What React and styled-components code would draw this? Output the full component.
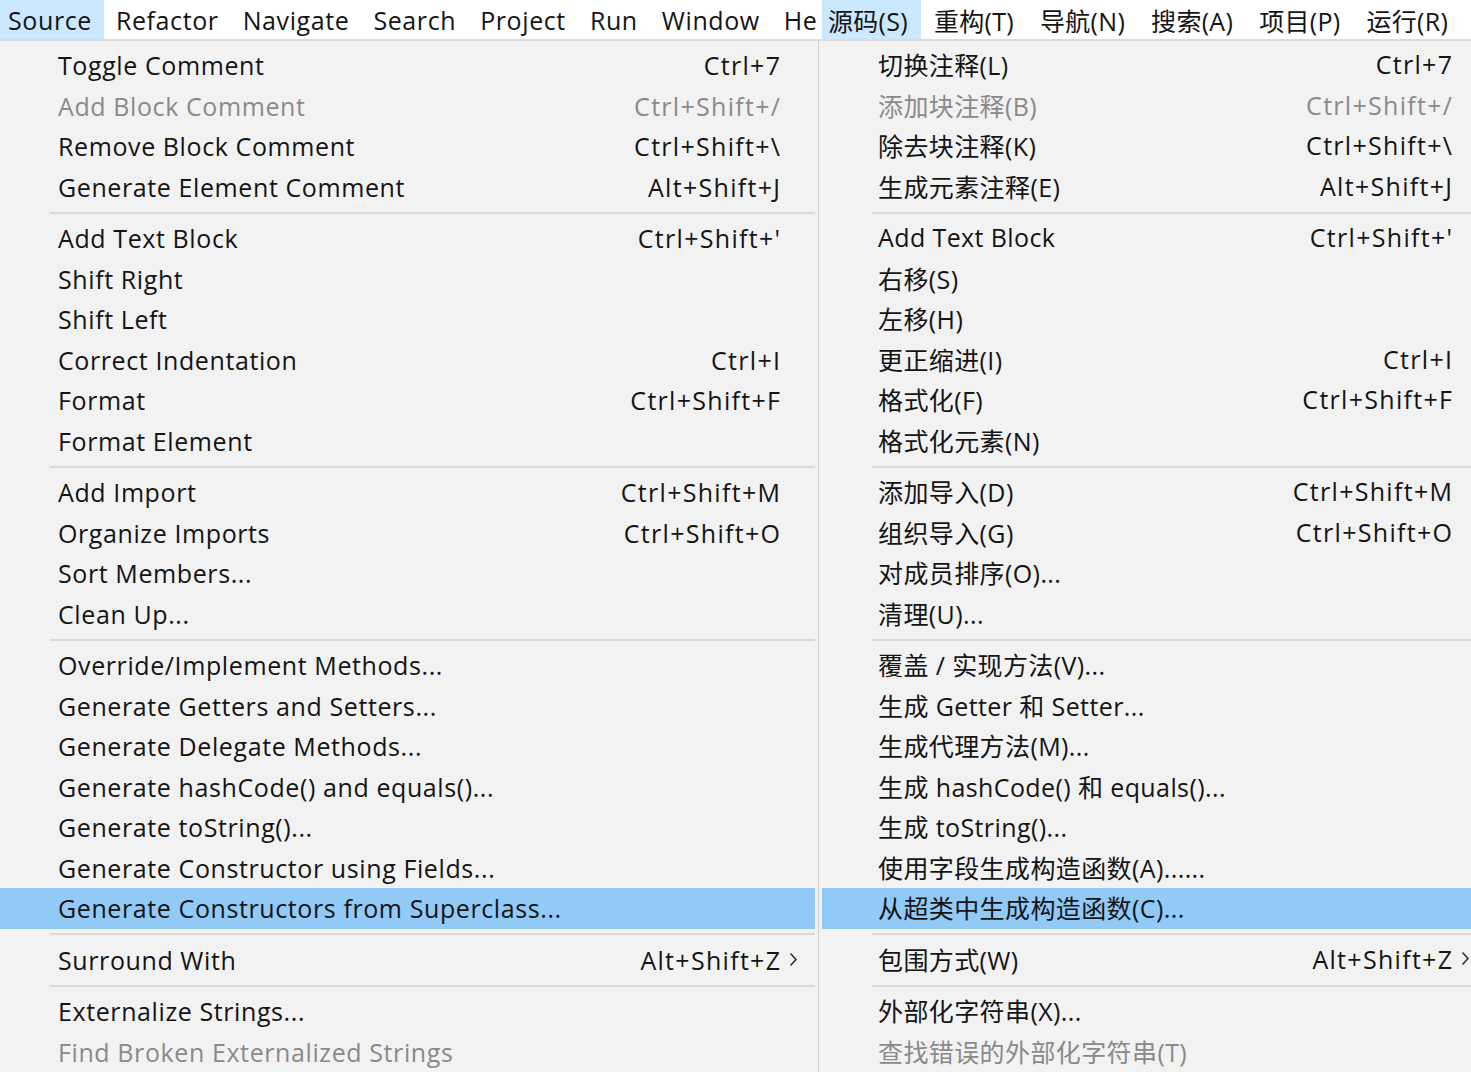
import React from 'react'
import styled, { createGlobalStyle } from "styled-components";

const GlobalStyle = createGlobalStyle`
  html, body {
    margin: 0;
    padding: 0;
    background: #f2f2f2;
    overflow: hidden;
  }
  body {
    font-family: "Open Sans", "Noto Sans CJK SC", sans-serif;
    color: #141414;
  }
`;

const Screen = styled.div`
  display: flex;
  width: 1471px;
  height: 1072px;
  overflow: hidden;
`;

const Panel = styled.div`
  display: flex;
  flex-direction: column;
  width: ${p => p.$width}px;
  flex-shrink: 0;
  overflow: hidden;
`;

const MenuBar = styled.div`
  display: flex;
  height: 40px;
  background: #ffffff;
  border-bottom: 2px solid #dcdcdc;
  padding-left: ${p => p.$lead}px;
  white-space: nowrap;
  overflow: hidden;
`;

const BarItem = styled.div`
  display: flex;
  align-items: center;
  flex-shrink: 0;
  padding: 0 ${p => p.$pad}px;
  font-size: 25px;
  letter-spacing: ${p => p.$spacing}px;
  background: ${p => (p.$active ? "#cce8ff" : "transparent")};
  &:first-child {
    padding-left: ${p => p.$firstPad}px;
  }
  &:last-child {
    flex-shrink: 1;
    min-width: 0;
    overflow: hidden;
    padding-right: 0;
  }
`;

const Dropdown = styled.div`
  flex: 1;
  display: flex;
  flex-direction: column;
  padding-top: 4px;
  padding-left: ${p => p.$padLeft}px;
  padding-right: ${p => p.$padRight}px;
  border-right: ${p => (p.$divider ? "1px solid #cfcfcf" : "none")};
`;

const Row = styled.div`
  display: flex;
  align-items: center;
  height: 40.5px;
  box-sizing: border-box;
  flex-shrink: 0;
  padding-left: ${p => p.$indent}px;
  padding-bottom: ${p => p.$lift}px;
  font-size: 25px;
  white-space: nowrap;
  color: ${p => (p.$disabled ? "#8a8a8a" : "#141414")};
  background: ${p => (p.$selected ? "#91c9f7" : "transparent")};
`;

const Label = styled.span`
  flex: 1;
  letter-spacing: ${p => p.$spacing}px;
`;

const Shortcut = styled.span`
  flex-shrink: 0;
  letter-spacing: 1.3px;
  margin-right: -1.3px;
`;

const ArrowCell = styled.span`
  width: ${p => p.$width}px;
  flex-shrink: 0;
  display: flex;
  align-items: center;
  padding-left: 9px;
  box-sizing: border-box;
`;

const Separator = styled.div`
  height: 11px;
  flex-shrink: 0;
  display: flex;
  align-items: center;
  margin-left: ${p => p.$inset}px;
  &::after {
    content: "";
    display: block;
    width: 100%;
    height: 2px;
    background: #d9d9d9;
  }
`;

const Chevron = () => (
  <svg width="9" height="15" viewBox="0 0 9 15">
    <path d="M1.5 1.5 L7 7.5 L1.5 13.5" fill="none" stroke="#333" strokeWidth="1.6" />
  </svg>
);

const SEP = "sep";

const englishBar = ["Source", "Refactor", "Navigate", "Search", "Project", "Run", "Window", "Help"];
const chineseBar = ["源码(S)", "重构(T)", "导航(N)", "搜索(A)", "项目(P)", "运行(R)"];

const englishItems = [
  { label: "Toggle Comment", key: "Ctrl+7" },
  { label: "Add Block Comment", key: "Ctrl+Shift+/", disabled: true },
  { label: "Remove Block Comment", key: "Ctrl+Shift+\\" },
  { label: "Generate Element Comment", key: "Alt+Shift+J" },
  SEP,
  { label: "Add Text Block", key: "Ctrl+Shift+'" },
  { label: "Shift Right" },
  { label: "Shift Left" },
  { label: "Correct Indentation", key: "Ctrl+I" },
  { label: "Format", key: "Ctrl+Shift+F" },
  { label: "Format Element" },
  SEP,
  { label: "Add Import", key: "Ctrl+Shift+M" },
  { label: "Organize Imports", key: "Ctrl+Shift+O" },
  { label: "Sort Members..." },
  { label: "Clean Up..." },
  SEP,
  { label: "Override/Implement Methods..." },
  { label: "Generate Getters and Setters..." },
  { label: "Generate Delegate Methods..." },
  { label: "Generate hashCode() and equals()..." },
  { label: "Generate toString()..." },
  { label: "Generate Constructor using Fields..." },
  { label: "Generate Constructors from Superclass...", selected: true },
  SEP,
  { label: "Surround With", key: "Alt+Shift+Z", submenu: true },
  SEP,
  { label: "Externalize Strings..." },
  { label: "Find Broken Externalized Strings", disabled: true },
];

const chineseItems = [
  { label: "切换注释(L)", key: "Ctrl+7" },
  { label: "添加块注释(B)", key: "Ctrl+Shift+/", disabled: true },
  { label: "除去块注释(K)", key: "Ctrl+Shift+\\" },
  { label: "生成元素注释(E)", key: "Alt+Shift+J" },
  SEP,
  { label: "Add Text Block", key: "Ctrl+Shift+'" },
  { label: "右移(S)" },
  { label: "左移(H)" },
  { label: "更正缩进(I)", key: "Ctrl+I" },
  { label: "格式化(F)", key: "Ctrl+Shift+F" },
  { label: "格式化元素(N)" },
  SEP,
  { label: "添加导入(D)", key: "Ctrl+Shift+M" },
  { label: "组织导入(G)", key: "Ctrl+Shift+O" },
  { label: "对成员排序(O)..." },
  { label: "清理(U)..." },
  SEP,
  { label: "覆盖 / 实现方法(V)..." },
  { label: "生成 Getter 和 Setter..." },
  { label: "生成代理方法(M)..." },
  { label: "生成 hashCode() 和 equals()..." },
  { label: "生成 toString()..." },
  { label: "使用字段生成构造函数(A)......" },
  { label: "从超类中生成构造函数(C)...", selected: true },
  SEP,
  { label: "包围方式(W)", key: "Alt+Shift+Z", submenu: true },
  SEP,
  { label: "外部化字符串(X)..." },
  { label: "查找错误的外部化字符串(T)", disabled: true },
];

const Menu = ({ width, bar, lead, barPad, firstPad, barSpacing, items, padLeft, padRight, divider, indent, lift, spacing, sepInset, arrowWidth }) => (
  <Panel $width={width}>
    <MenuBar $lead={lead}>
      {bar.map((b, i) => (
        <BarItem key={b} $active={i === 0} $pad={barPad} $firstPad={firstPad} $spacing={barSpacing}>{b}</BarItem>
      ))}
    </MenuBar>
    <Dropdown $padLeft={padLeft} $padRight={padRight} $divider={divider}>
      {items.map((it, i) =>
        it === SEP ? (
          <Separator key={i} $inset={sepInset} />
        ) : (
          <Row key={i} $indent={indent} $lift={lift} $disabled={it.disabled} $selected={it.selected}>
            <Label $spacing={spacing}>{it.label}</Label>
            {it.key && <Shortcut>{it.key}</Shortcut>}
            <ArrowCell $width={arrowWidth}>{it.submenu && <Chevron />}</ArrowCell>
          </Row>
        )
      )}
    </Dropdown>
  </Panel>
);

const App = () => {
  return (
    <>
      <GlobalStyle />
      <Screen>
        <Menu
          width={819}
          bar={englishBar}
          lead={0}
          barPad={12}
          firstPad={8}
          barSpacing={0.6}
          items={englishItems}
          padLeft={0}
          padRight={3}
          divider
          indent={58}
          lift={0}
          spacing={0.6}
          sepInset={50}
          arrowWidth={35}
        />
        <Menu
          width={652}
          bar={chineseBar}
          lead={3}
          barPad={13}
          firstPad={6}
          barSpacing={0.3}
          items={chineseItems}
          padLeft={3}
          padRight={0}
          indent={56}
          lift={2}
          spacing={0.4}
          sepInset={50}
          arrowWidth={19}
        />
      </Screen>
    </>
  )
}

export default App
